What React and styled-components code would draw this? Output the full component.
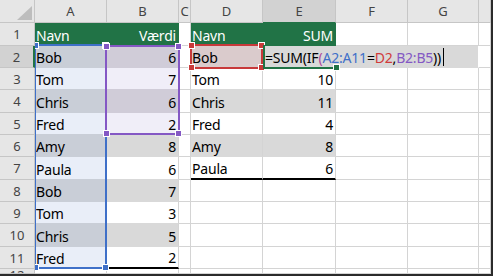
import React from 'react';
import styled, { createGlobalStyle } from 'styled-components';

const GlobalStyle = createGlobalStyle`
  html, body { margin: 0; padding: 0; background: #fff; }
  body { font-family: "Noto Sans", "Open Sans", sans-serif; }
`;

const C = {
  grid: '#d4d4d4',
  headBg: '#e6e6e6',
  headSel: '#d2d2d2',
  headLine: '#c6c6c6',
  green: '#217346',
  band: '#d9d9d9',
  blue: '#3f70c8',
  blueDark: '#c9ced7',
  blueLight: '#e9eef8',
  purple: '#8458c4',
  purpleDark: '#d0ccd8',
  purpleLight: '#f0eef8',
  red: '#c8393a',
  redTint: '#dacbcc',
  edit: '#d9d9d9',
};

const Frame = styled.div`
  position: relative;
  width: 493px;
  height: 276px;
  box-sizing: border-box;
  border-right: 2px solid #2b2b2b;
  border-bottom: 2px solid #2b2b2b;
  overflow: hidden;
  background: #fff;
`;

const Sheet = styled.div`
  display: grid;
  grid-template-columns: 35px 72px 72px 12px 72px 73px 72px 71px 12px;
  grid-template-rows: 23px 23px 22px 22px 23px 22px 22px 23px 22px 22px 23px 22px 5px;
`;

const Corner = styled.div`
  position: relative;
  box-sizing: border-box;
  background: ${C.headBg};
  border-right: 1px solid ${C.headLine};
  border-bottom: 1px solid ${C.headLine};
  &::after {
    content: '';
    position: absolute;
    right: 2px;
    bottom: 2px;
    width: 0;
    height: 0;
    border-left: 15px solid transparent;
    border-bottom: 14px solid #bdbdbd;
  }
`;

const ColHeader = styled.div`
  box-sizing: border-box;
  overflow: hidden;
  background: ${p => (p.$sel ? C.headSel : C.headBg)};
  border-right: 1px solid ${C.headLine};
  border-bottom: 1px solid ${p => (p.$sel ? C.green : C.headLine)};
  color: #444;
  font-size: 13px;
  line-height: 17px;
  padding-top: 3px;
  text-align: center;
`;

const RowHeader = styled.div`
  box-sizing: border-box;
  overflow: hidden;
  background: ${p => (p.$sel ? C.headSel : C.headBg)};
  border-right: ${p => (p.$sel ? `2px solid ${C.green}` : `1px solid ${C.headLine}`)};
  border-bottom: 1px solid ${C.headLine};
  color: #444;
  font-size: 13px;
  line-height: ${p => (p.$partial ? '12px' : '17px')};
  padding-top: ${p => (p.$partial ? '0' : '3px')};
  text-align: center;
`;

const Cell = styled.div`
  box-sizing: border-box;
  min-width: 0;
  overflow: visible;
  display: flex;
  align-items: flex-end;
  justify-content: ${p => (p.$right ? 'flex-end' : 'flex-start')};
  padding: ${p => (p.$right ? '0 2px 0 0' : `0 0 0 ${p.$pad ?? 1}px`)};
  grid-column: span ${p => p.$span || 1};
  background: ${p => p.$bg || '#fff'};
  border-right: 1px solid ${p => p.$vline || C.grid};
  border-bottom: ${p => (p.$underline ? '2px solid #000' : `1px solid ${p.$hline || C.grid}`)};
  color: ${p => p.$color || '#000'};
  font-size: 14px;
  line-height: 19px;
  letter-spacing: -0.2px;
  white-space: nowrap;
`;

const Ref = styled.span`
  color: ${p => p.$c};
`;

const Caret = styled.span`
  display: inline-block;
  width: 1px;
  height: 18px;
  margin-left: 2px;
  margin-bottom: 1px;
  background: #000;
  vertical-align: bottom;
`;

const Overlay = styled.div`
  position: absolute;
  left: 35px;
  top: 23px;
  right: 0;
  bottom: 0;
  overflow: hidden;
  pointer-events: none;
`;

const RangeBox = styled.div`
  position: absolute;
  left: ${p => p.$x - 35}px;
  top: ${p => p.$y - 23}px;
  width: ${p => p.$w}px;
  height: ${p => p.$h}px;
  box-sizing: border-box;
  border: 2px solid ${p => p.$color};
`;

const EditMark = styled.div`
  position: absolute;
  left: ${263 - 35}px;
  top: ${45 - 23}px;
  width: 73px;
  height: 24px;
  box-sizing: border-box;
  border-left: 2px solid ${C.green};
  border-bottom: 2px solid ${C.green};
`;

const Handle = styled.span`
  position: absolute;
  width: 7px;
  height: 7px;
  box-sizing: border-box;
  background: ${p => p.$color};
  border: 1px solid #fff;
  ${p => p.$vy}: -4px;
  ${p => p.$hx}: -4px;
`;

const Handles = ({ color }) => (
  <>
    <Handle $color={color} $vy="top" $hx="left" />
    <Handle $color={color} $vy="top" $hx="right" />
    <Handle $color={color} $vy="bottom" $hx="left" />
    <Handle $color={color} $vy="bottom" $hx="right" />
  </>
);

const names = ['Bob', 'Tom', 'Chris', 'Fred', 'Amy', 'Paula', 'Bob', 'Tom', 'Chris', 'Fred'];
const vals = [6, 7, 6, 2, 8, 6, 7, 3, 5, 2];
const sumNames = ['Tom', 'Chris', 'Fred', 'Amy', 'Paula'];
const sums = [10, 11, 4, 8, 6];
const COLS = ['A', 'B', 'C', 'D', 'E', 'F', 'G', ''];

const green = { $bg: C.green, $vline: C.green, $hline: C.green, $color: '#fff' };

function rowCells(r) {
  const cells = [];
  const even = r % 2 === 0;
  // A
  if (r === 1) cells.push(<Cell key="A" {...green}>Navn</Cell>);
  else if (r <= 11)
    cells.push(
      <Cell key="A" $bg={even ? C.blueDark : C.blueLight} $hline={C.blueDark}>
        {names[r - 2]}
      </Cell>
    );
  else cells.push(<Cell key="A" />);
  // B
  if (r === 1) cells.push(<Cell key="B" {...green} $right>Værdi</Cell>);
  else if (r <= 5)
    cells.push(
      <Cell key="B" $right $bg={even ? C.purpleDark : C.purpleLight} $hline={C.purpleDark}>
        {vals[r - 2]}
      </Cell>
    );
  else if (r <= 11)
    cells.push(
      <Cell key="B" $right $bg={even ? C.band : '#fff'} $hline={C.band} $underline={r === 11}>
        {vals[r - 2]}
      </Cell>
    );
  else cells.push(<Cell key="B" />);
  // C
  cells.push(<Cell key="C" />);
  // D
  if (r === 1) cells.push(<Cell key="D" {...green}>Navn</Cell>);
  else if (r === 2) cells.push(<Cell key="D" $bg={C.redTint} $hline={C.redTint}>Bob</Cell>);
  else if (r <= 7)
    cells.push(
      <Cell key="D" $bg={even ? C.band : '#fff'} $hline={C.band} $underline={r === 7}>
        {sumNames[r - 3]}
      </Cell>
    );
  else cells.push(<Cell key="D" />);
  // E (+F,G)
  if (r === 1) {
    cells.push(<Cell key="E" {...green} $right>SUM</Cell>);
  } else if (r === 2) {
    cells.push(
      <Cell key="E" $span={3} $pad={2} $bg={C.edit} $vline="#fff" $hline={C.edit}>
        <span>
          =SUM(IF<Ref $c="#b0479b">(</Ref>
          <Ref $c={C.blue}>A2:A11</Ref>=<Ref $c="#d13a3a">D2</Ref>,
          <Ref $c={C.purple}>B2:B5</Ref>))
        </span>
        <Caret />
      </Cell>
    );
  } else if (r <= 7) {
    cells.push(
      <Cell key="E" $right $bg={even ? C.band : '#fff'} $hline={C.band} $underline={r === 7}>
        {sums[r - 3]}
      </Cell>
    );
  } else cells.push(<Cell key="E" />);
  if (r !== 2) {
    cells.push(<Cell key="F" />);
    cells.push(<Cell key="G" />);
  }
  cells.push(<Cell key="H" />);
  return cells;
}

export default function App() {
  const rows = Array.from({ length: 12 }, (_, i) => i + 1);
  return (
    <>
      <GlobalStyle />
      <Frame>
        <Sheet>
          <Corner />
          {COLS.map((c, i) => (
            <ColHeader key={i} $sel={c === 'E'}>
              {c}
            </ColHeader>
          ))}
          {rows.map(r => (
            <React.Fragment key={r}>
              <RowHeader $sel={r === 2} $partial={r === 12}>
                {r}
              </RowHeader>
              {rowCells(r)}
            </React.Fragment>
          ))}
        </Sheet>
        <Overlay>
          <RangeBox $x={34} $y={44} $w={73} $h={225} $color={C.blue}>
            <Handles color={C.blue} />
          </RangeBox>
          <RangeBox $x={105} $y={45} $w={75} $h={90} $color={C.purple}>
            <Handles color={C.purple} />
          </RangeBox>
          <RangeBox $x={190} $y={44} $w={73} $h={25} $color={C.red}>
            <Handles color={C.red} />
          </RangeBox>
          <EditMark>
            <Handle $color={C.green} $vy="bottom" $hx="right" />
          </EditMark>
        </Overlay>
      </Frame>
    </>
  );
}
